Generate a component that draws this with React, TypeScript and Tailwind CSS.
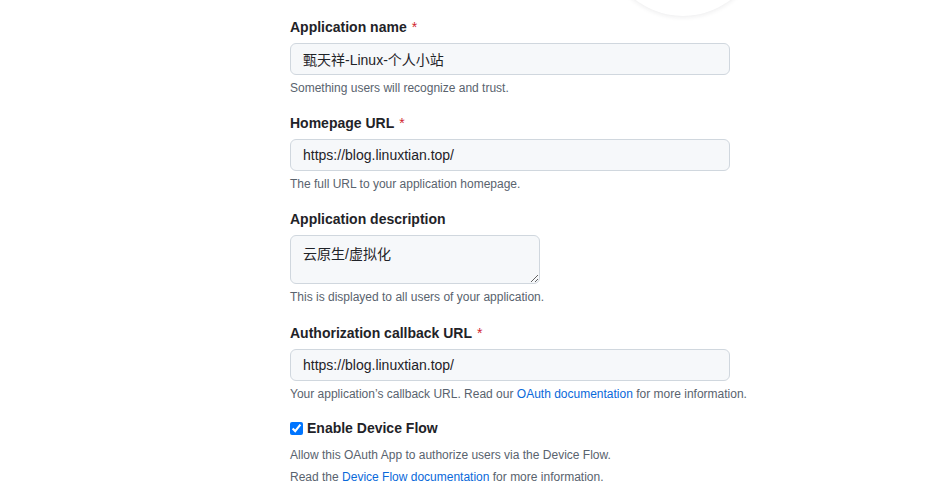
import React from 'react';

const font = { fontFamily: '"Liberation Sans", "Noto Sans CJK SC", sans-serif' };

const Label: React.FC<{ text: string; required?: boolean }> = ({ text, required }) => (
  <label className="block mb-[5px] text-[14px] leading-[21px] font-semibold text-[#1f2328]">
    {text}
    {required && <span className="ml-[5px] font-normal text-[#d1242f]">*</span>}
  </label>
);

const Note: React.FC<{ children: React.ReactNode }> = ({ children }) => (
  <p className="mt-[4px] text-[12px] leading-[19px] text-[#59636e]">{children}</p>
);

const TextInput: React.FC<{ value: string }> = ({ value }) => (
  <input
    type="text"
    readOnly
    value={value}
    className="block w-[440px] h-[32px] px-[12px] text-[14px] leading-[20px] text-[#1f2328] bg-[#f6f8fa] border border-[#d0d7de] rounded-[6px] outline-none"
  />
);

export default function App() {
  return (
    <div className="relative min-h-[498px] bg-white overflow-hidden" style={font}>
      {/* logo preview circle, cut off at the top */}
      <div className="absolute left-[605px] top-[-140px] w-[156px] h-[156px] rounded-full bg-white shadow-[0_1px_5px_rgba(31,35,40,0.09)]" />

      <form className="pl-[290px] pt-[17px]">
        <div className="mb-[15px]">
          <Label text="Application name" required />
          <TextInput value="甄天祥-Linux-个人小站" />
          <Note>Something users will recognize and trust.</Note>
        </div>

        <div className="mb-[15px]">
          <Label text="Homepage URL" required />
          <TextInput value="https://blog.linuxtian.top/" />
          <Note>The full URL to your application homepage.</Note>
        </div>

        <div className="mb-[16px]">
          <Label text="Application description" />
          <textarea
            readOnly
            value="云原生/虚拟化"
            className="block w-[250px] h-[49px] px-[12px] pt-[8px] pb-[5px] text-[14px] leading-[20px] text-[#1f2328] bg-[#f6f8fa] border border-[#d0d7de] rounded-[6px] outline-none"
          />
          <Note>This is displayed to all users of your application.</Note>
        </div>

        <div className="mb-[14px]">
          <Label text="Authorization callback URL" required />
          <TextInput value="https://blog.linuxtian.top/" />
          <Note>
            Your application’s callback URL. Read our{' '}
            <a href="#" className="text-[#0969da]">OAuth documentation</a> for more information.
          </Note>
        </div>

        <div>
          <label className="flex items-center gap-[4px] text-[14px] leading-[21px] font-semibold text-[#1f2328]">
            <input type="checkbox" defaultChecked className="m-0 w-[13px] h-[13px]" />
            Enable Device Flow
          </label>
          <p className="mt-[7px] text-[12px] leading-[19px] text-[#59636e]">
            Allow this OAuth App to authorize users via the Device Flow.
          </p>
          <p className="mt-[3px] text-[12px] leading-[19px] text-[#59636e]">
            Read the <a href="#" className="text-[#0969da]">Device Flow documentation</a> for more information.
          </p>
        </div>
      </form>
    </div>
  );
}
